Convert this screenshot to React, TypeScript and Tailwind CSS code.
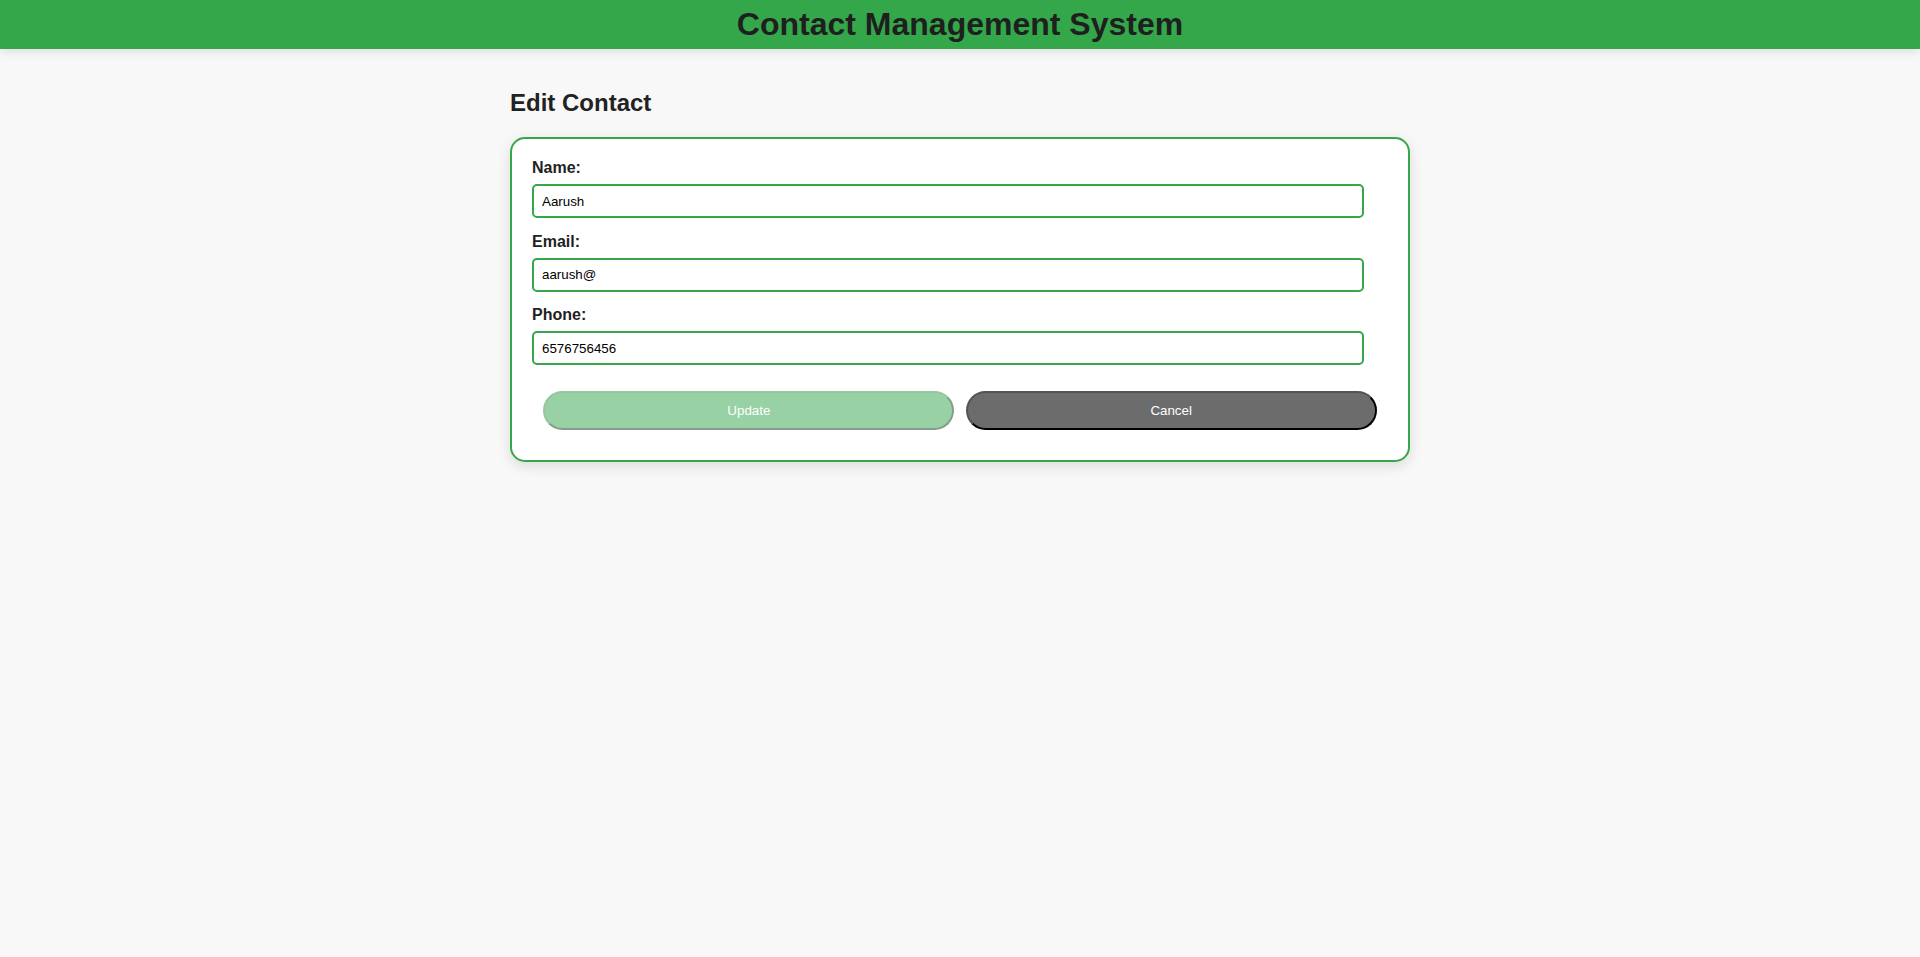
import { type FC, useState } from 'react';

type FieldProps = {
  label: string;
  value: string;
  type?: string;
  onChange: (v: string) => void;
};

const Field: FC<FieldProps> = ({ label, value, type = 'text', onChange }) => (
  <div className="mb-[14.6px]">
    <label className="block mb-[7px] text-[16px] leading-[normal] font-bold text-[#222]">{label}</label>
    <input
      type={type}
      value={value}
      onChange={(e) => onChange(e.target.value)}
      className="block w-[832px] h-[34px] px-2 text-[13.333px] leading-[normal] text-black bg-white border-2 border-[#34a74b] rounded-[5px] outline-none"
    />
  </div>
);

export default function App() {
  const [name, setName] = useState('Aarush');
  const [email, setEmail] = useState('aarush@');
  const [phone, setPhone] = useState('6576756456');

  return (
    <div className="min-h-[957px] bg-[#f8f8f8] font-['Liberation_Sans',Arial,sans-serif] text-[#222]">
      <header className="bg-[#34a74b] py-[6px] shadow-[0_2px_10px_rgba(0,0,0,0.12)] relative">
        <h1 className="text-center text-[32px] leading-[normal] font-bold text-[#1f1f1f]">Contact Management System</h1>
      </header>

      <main className="w-[900px] mx-auto pt-5">
        <h2 className="mt-[20px] mb-[20px] text-[24px] leading-[normal] font-bold text-[#222]">Edit Contact</h2>

        <form
          onSubmit={(e) => e.preventDefault()}
          className="bg-white border-2 border-[#34a74b] rounded-[15px] p-5 shadow-[0_4px_14px_rgba(0,0,0,0.12)]"
        >
          <Field label="Name:" value={name} onChange={setName} />
          <Field label="Email:" value={email} type="email" onChange={setEmail} />
          <Field label="Phone:" value={phone} onChange={setPhone} />

          <div className="flex justify-evenly mt-[26px] mb-[10px]">
            <button
              type="submit"
              disabled
              className="w-[48%] h-[39px] rounded-full bg-[#34a74b] opacity-50 text-white text-[13.333px] border-2 [border-style:outset] border-[#2f8f42]"
            >
              Update
            </button>
            <button
              type="button"
              className="w-[48%] h-[39px] rounded-full bg-[#6c6c6c] text-white text-[13.333px] border-2 [border-style:outset] border-black"
            >
              Cancel
            </button>
          </div>
        </form>
      </main>
    </div>
  );
}
